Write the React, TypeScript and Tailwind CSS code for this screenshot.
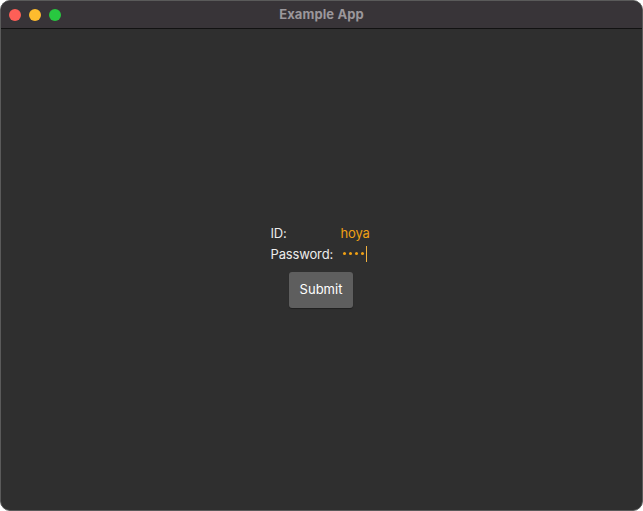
import React from "react";

export default function App() {
  return (
    <div className="w-[643px] h-[511px] bg-white" style={{ fontFamily: "Inter, 'Liberation Sans', sans-serif" }}>
      <div className="w-full h-full flex flex-col rounded-[10px] overflow-hidden border border-[#5a5a5a] bg-[#2f2f2f]">
        <div className="relative h-[28px] shrink-0 bg-[#383438] border-b border-[#121212] flex items-center justify-center">
          <div className="absolute left-[8px] top-[8px] flex gap-[8px]">
            <span className="w-[12px] h-[12px] rounded-full bg-[#fe5f57]" />
            <span className="w-[12px] h-[12px] rounded-full bg-[#febc2e]" />
            <span className="w-[12px] h-[12px] rounded-full bg-[#28c840]" />
          </div>
          <span className="text-[13px] font-bold text-[#9b979b] tracking-[0.1px]">Example App</span>
        </div>
        <div className="flex-1 flex flex-col items-center justify-center pb-[8px]">
          <div className="flex flex-col items-center">
            <div className="grid grid-cols-[70px_30px] gap-y-[3px] text-[13px] text-[#ececec] ml-[-2px] tracking-[-0.15px]">
              <span className="leading-[18px]">ID:</span>
              <span className="leading-[18px] text-[#f0a014]">hoya</span>
              <span className="leading-[18px]">Password:</span>
              <span className="leading-[18px] flex items-center gap-[3px] pl-[2px]">
                <span className="w-[3px] h-[3px] rounded-full bg-[#f0a014]" />
                <span className="w-[3px] h-[3px] rounded-full bg-[#f0a014]" />
                <span className="w-[3px] h-[3px] rounded-full bg-[#f0a014]" />
                <span className="w-[3px] h-[3px] rounded-full bg-[#f0a014]" />
                <span className="w-[1px] h-[16px] bg-[#f3b340] ml-[-1px]" />
              </span>
            </div>
            <button className="mt-[9px] ml-[-1px] w-[64px] h-[36px] rounded-[3px] bg-[#5e5e5e] text-[13px] text-white shadow-[0_1px_1px_rgba(0,0,0,0.35)]">
              Submit
            </button>
          </div>
        </div>
      </div>
    </div>
  );
}
